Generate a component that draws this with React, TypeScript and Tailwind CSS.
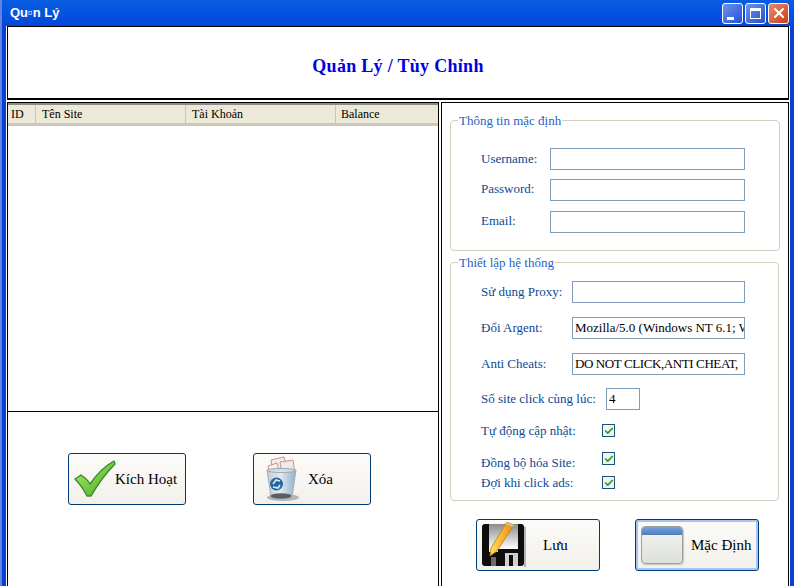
import type { ReactNode } from 'react';
import { Check, X } from 'lucide-react';

const serif = { fontFamily: '"Liberation Serif", "Times New Roman", serif' };

const CheckIcon = () => (
  <svg width="42" height="38" viewBox="0 0 42 38">
    <defs>
      <linearGradient id="chk" x1="0" y1="0" x2="1" y2="1">
        <stop offset="0" stopColor="#b6ea6a" />
        <stop offset="0.6" stopColor="#6cc63a" />
        <stop offset="1" stopColor="#2f9a1c" />
      </linearGradient>
    </defs>
    <path
      d="M1 19 L7 15 C10 17 14 20 16 24 C22 15 31 6 40 1 L41 4 C33 12 24 24 17 36 L13 36 C10 30 6 24 1 19 Z"
      fill="url(#chk)"
      stroke="#3a8a34"
      strokeWidth="1.4"
      strokeLinejoin="round"
    />
  </svg>
);

const TrashIcon = () => (
  <svg width="36" height="46" viewBox="0 0 36 46">
    <defs>
      <linearGradient id="bin" x1="0" y1="0" x2="1" y2="0">
        <stop offset="0" stopColor="#c3cdd3" />
        <stop offset="0.45" stopColor="#e4eaee" />
        <stop offset="1" stopColor="#8fb0cc" />
      </linearGradient>
    </defs>
    <path d="M5 4 L18 1 L22 14 L7 18 Z" fill="#f3eeee" stroke="#cf9090" />
    <path d="M14 6 L27 4 L29 18 L16 18 Z" fill="#efeaea" stroke="#cf9090" />
    <path d="M2 10 L11 7 L14 18 L4 19 Z" fill="#f6f1f1" stroke="#cf9090" />
    <path d="M1 14 H30 L26 41 H5 Z" fill="url(#bin)" stroke="#a3aeb6" />
    <ellipse cx="15.5" cy="14.5" rx="14.5" ry="2" fill="#dfe7ec" fillOpacity="0.7" stroke="#9aa7b0" />
    <circle cx="10.5" cy="28" r="6.5" fill="#24689f" />
    <path d="M7 28 L10 24 L14 25 M14 29 L12 32 L7 31" stroke="#dcecf7" strokeWidth="1.6" fill="none" />
    <ellipse cx="17" cy="41.5" rx="16" ry="3.5" fill="#b3b6b8" />
    <ellipse cx="15" cy="40" rx="10.5" ry="2.8" fill="#5a5e61" />
  </svg>
);

const SaveIcon = () => (
  <svg width="46" height="46" viewBox="0 0 46 46">
    <defs>
      <linearGradient id="pen" x1="0" y1="0" x2="1" y2="0">
        <stop offset="0" stopColor="#ffe05a" />
        <stop offset="1" stopColor="#ee8a10" />
      </linearGradient>
      <linearGradient id="disk" x1="0" y1="0" x2="0" y2="1">
        <stop offset="0" stopColor="#8c8c8c" />
        <stop offset="1" stopColor="#ffffff" />
      </linearGradient>
    </defs>
    <rect x="1" y="2" width="42" height="42" rx="3" fill="#0d0d0d" />
    <rect x="43" y="5" width="2" height="40" fill="#b5b5b5" />
    <rect x="8" y="2" width="29" height="25" fill="url(#disk)" />
    <rect x="8" y="27" width="9" height="3" fill="#ededed" />
    <rect x="24" y="31" width="13" height="13" fill="#cfcfcf" />
    <rect x="28" y="33" width="4" height="11" fill="#0d0d0d" />
    <rect x="10" y="35" width="5" height="9" fill="#6b6b6b" />
    <path d="M26 0 L33 3 L16 29 L9 34 L10 26 Z" fill="url(#pen)" stroke="#c07a0d" strokeWidth="0.8" />
    <path d="M26 0 L33 3 L32 5 L25 2 Z" fill="#c9c2a8" />
  </svg>
);

const WindowIcon = () => (
  <div className="flex h-[38px] w-[42px] flex-col overflow-hidden rounded-[4px] border border-[#9aa2a4] bg-gradient-to-b from-[#f4f5f2] to-[#dde0da] shadow-[1px_1px_1px_#c4c4c4]">
    <div className="h-[8px] bg-gradient-to-b from-[#7aa3dc] to-[#4d7cc0]" />
  </div>
);

const XpButton = ({
  icon,
  label,
  focused,
  width,
  textClass,
  iconClass,
}: {
  icon: ReactNode;
  label: string;
  focused?: boolean;
  width: string;
  textClass: string;
  iconClass: string;
}) => (
  <button
    className={`relative flex h-[52px] items-center rounded-[3px] border border-[#003c74] bg-gradient-to-b from-[#fbfbf9] to-[#f3f0ea] text-[15px] text-black ${width} ${
      focused ? 'shadow-[inset_0_0_0_2px_#a5c4ef]' : ''
    }`}
  >
    <span className={`absolute inset-y-0 flex items-center ${iconClass}`}>{icon}</span>
    <span className={`absolute whitespace-nowrap ${textClass}`}>{label}</span>
  </button>
);

const Field = ({
  label,
  inputClass,
  labelClass,
  rowClass,
  value,
  valueClass,
}: {
  label: string;
  inputClass: string;
  labelClass: string;
  rowClass?: string;
  value?: string;
  valueClass?: string;
}) => (
  <div className={`flex items-center ${rowClass ?? ''}`}>
    <span className={`whitespace-nowrap text-[13px] leading-none text-[#0b4a94] ${labelClass}`}>{label}</span>
    <div
      className={`flex h-[22px] items-center overflow-hidden whitespace-nowrap border border-[#7f9db9] bg-white pl-[2px] text-[13px] text-black ${inputClass} ${valueClass ?? ''}`}
    >
      {value}
    </div>
  </div>
);

const Tick = ({ label, rowClass, labelClass }: { label: string; rowClass: string; labelClass?: string }) => (
  <div className={`relative flex h-[13px] items-center ${rowClass}`}>
    <span className={`whitespace-nowrap text-[13px] leading-none text-[#0b4a94] ${labelClass ?? ''}`}>{label}</span>
    <span className="absolute left-[121px] flex h-[13px] w-[13px] items-center justify-center border border-[#1c5180] bg-[#f4f4ee]">
      <Check size={10} strokeWidth={4} className="text-[#21a121]" />
    </span>
  </div>
);

const Group = ({
  title,
  children,
  className,
}: {
  title: string;
  children: ReactNode;
  className: string;
}) => (
  <fieldset className={`rounded-[4px] border border-[#d0d0bf] ${className}`}>
    <legend className="ml-[7px] px-[1px] text-[13px] leading-[15px] text-[#2a5fc8]">{title}</legend>
    {children}
  </fieldset>
);

const TitleButton = ({ children, red }: { children: ReactNode; red?: boolean }) => (
  <div
    className={`flex h-[21px] w-[21px] items-center justify-center rounded-[3px] border border-white ${
      red ? 'bg-gradient-to-br from-[#e98a6c] to-[#c93a12]' : 'bg-gradient-to-br from-[#6f92ee] to-[#2450d0]'
    }`}
  >
    {children}
  </div>
);

export default function App() {
  return (
    <div
      className="flex h-[586px] w-[794px] flex-col overflow-hidden border-l-2 border-[#5f86dc] bg-[#0a3fd6]"
      style={serif}
    >
      {/* Title bar */}
      <div className="flex h-[26px] shrink-0 items-center justify-between bg-gradient-to-b from-[#0a5ce0] via-[#0553e2] to-[#0446d6] pl-[8px] pr-[5px]">
        <span
          className="text-[13px] font-bold text-white"
          style={{ fontFamily: '"Liberation Sans", Arial, sans-serif' }}
        >
          Qu▫n Lý
        </span>
        <div className="flex gap-[2px]">
          <TitleButton>
            <div className="mt-[10px] mr-[4px] h-[3px] w-[7px] bg-white" />
          </TitleButton>
          <TitleButton>
            <div className="h-[11px] w-[11px] border border-t-[3px] border-white" />
          </TitleButton>
          <TitleButton red>
            <X size={16} strokeWidth={3} className="text-white" />
          </TitleButton>
        </div>
      </div>

      {/* Client area */}
      <div className="ml-[4px] mr-[4px] flex min-h-0 flex-1 flex-col gap-[1px] bg-white px-[1px]">
        <div className="flex h-[74px] shrink-0 items-center justify-center border border-b-2 border-black pt-[7px] text-[18px] font-bold tracking-[0.3px] text-[#0000e0]">
          Quản Lý / Tùy Chỉnh
        </div>

        <div className="mt-[1px] flex min-h-0 flex-1 gap-[2px]">
          {/* Left panel */}
          <div className="flex w-[432px] shrink-0 flex-col border border-b-0 border-black">
            <div className="flex h-[23px] shrink-0 items-center border-t-2 border-[#8a8a80] bg-[#ece9d8] pb-[3px] text-[12px] text-black shadow-[inset_0_-3px_0_#cbc7b8]">
              <span className="w-[27px] pl-[3px]">ID</span>
              <span className="w-[150px] border-l border-[#c9c7ba] pl-[6px]">Tên Site</span>
              <span className="w-[150px] border-l border-[#c9c7ba] pl-[6px]">Tài Khoản</span>
              <span className="flex-1 border-l border-[#c9c7ba] pl-[5px]">Balance</span>
            </div>
            <div className="h-[286px] shrink-0 border-b border-black" />
            <div className="flex gap-[67px] pl-[60px] pt-[41px]">
              <XpButton
                icon={<CheckIcon />}
                label="Kích Hoạt"
                width="w-[118px]"
                iconClass="left-[5px]"
                textClass="left-[46px]"
              />
              <XpButton
                icon={<TrashIcon />}
                label="Xóa"
                width="w-[118px]"
                iconClass="left-[12px]"
                textClass="left-[54px]"
              />
            </div>
          </div>

          {/* Right panel */}
          <div className="flex min-w-0 flex-1 flex-col border border-b-0 border-black px-[8px] pt-[10px]">
            <Group title="Thông tin mặc định" className="h-[138px]">
              <div className="pl-[30px] pt-[20px]">
                <Field label="Username:" labelClass="w-[69px] pb-[2px]" inputClass="w-[195px]" />
                <Field label="Password:" rowClass="mt-[9px]" labelClass="w-[69px] pb-[4px]" inputClass="w-[195px]" />
                <Field label="Email:" rowClass="mt-[10px]" labelClass="w-[69px] pb-[4px]" inputClass="w-[195px]" />
              </div>
            </Group>
            <Group title="Thiết lập hệ thống" className="mt-[4px] mr-[1px] h-[246px]">
              <div className="pl-[30px] pt-[11px]">
                <Field label="Sử dụng Proxy:" labelClass="w-[91px] pb-[2px]" inputClass="w-[173px]" />
                <Field
                  label="Đổi Argent:"
                  rowClass="mt-[14px]"
                  labelClass="w-[91px] pb-[2px]"
                  inputClass="w-[173px]"
                  value="Mozilla/5.0 (Windows NT 6.1; WOW64)"
                />
                <Field
                  label="Anti Cheats:"
                  rowClass="mt-[14px]"
                  labelClass="w-[91px] pb-[2px]"
                  inputClass="w-[173px]"
                  valueClass="tracking-[-0.4px]"
                  value="DO NOT CLICK,ANTI CHEAT,"
                />
                <Field
                  label="Số site click cùng lúc:"
                  rowClass="mt-[13px]"
                  labelClass="w-[125px] pb-[2px]"
                  inputClass="w-[34px]"
                  value="4"
                />
                <Tick label="Tự động cập nhật:" rowClass="mt-[14px]" />
                <Tick label="Đồng bộ hóa Site:" rowClass="mt-[15px]" labelClass="pt-[7px]" />
                <Tick label="Đợi khi click ads:" rowClass="mt-[11px]" />
              </div>
            </Group>
            <div className="mt-[18px] flex gap-[35px] pl-[26px]">
              <XpButton
                icon={<SaveIcon />}
                label="Lưu"
                width="w-[124px]"
                iconClass="left-[4px]"
                textClass="left-[66px]"
              />
              <XpButton
                icon={<WindowIcon />}
                label="Mặc Định"
                focused
                width="w-[124px]"
                iconClass="left-[5px]"
                textClass="left-[55px]"
              />
            </div>
          </div>
        </div>
      </div>
    </div>
  );
}
